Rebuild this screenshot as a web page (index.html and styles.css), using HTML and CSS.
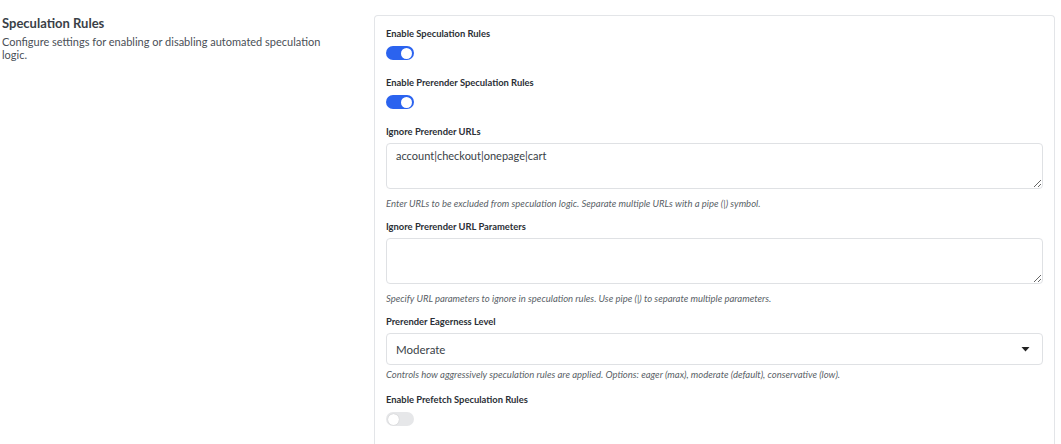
FILE: index.html
```html
<!DOCTYPE html>
<html lang="en">
<head>
<meta charset="utf-8">
<title>Speculation Rules</title>
<link rel="stylesheet" href="styles.css">
</head>
<body>
<div class="layout">
  <div class="intro">
    <h2 class="intro-title">Speculation Rules</h2>
    <p class="intro-desc">Configure settings for enabling or disabling automated speculation logic.</p>
  </div>
  <div class="card">
    <div class="field field-switch">
      <div class="label">Enable Speculation Rules</div>
      <span class="switch on"></span>
    </div>
    <div class="field field-switch">
      <div class="label">Enable Prerender Speculation Rules</div>
      <span class="switch on"></span>
    </div>
    <div class="field field-input">
      <div class="label">Ignore Prerender URLs</div>
      <textarea class="textarea">account|checkout|onepage|cart</textarea>
      <div class="help">Enter URLs to be excluded from speculation logic. Separate multiple URLs with a pipe (|) symbol.</div>
    </div>
    <div class="field field-input">
      <div class="label">Ignore Prerender URL Parameters</div>
      <textarea class="textarea"></textarea>
      <div class="help">Specify URL parameters to ignore in speculation rules. Use pipe (|) to separate multiple parameters.</div>
    </div>
    <div class="field field-input">
      <div class="label">Prerender Eagerness Level</div>
      <div class="select">
        <span class="select-value">Moderate</span>
        <svg class="caret" width="9" height="5" viewBox="0 0 9 5"><path d="M0.5 0H8.5L4.5 4.5Z" fill="#222"/></svg>
      </div>
      <div class="help">Controls how aggressively speculation rules are applied. Options: eager (max), moderate (default), conservative (low).</div>
    </div>
    <div class="field field-switch">
      <div class="label">Enable Prefetch Speculation Rules</div>
      <span class="switch"></span>
    </div>
  </div>
</div>
</body>
</html>
```
FILE: styles.css
```css
* { box-sizing: border-box; }
html, body { margin: 0; padding: 0; background: #fff; }
body {
  font-family: "Lato", "Noto Sans", sans-serif;
  color: #3a3f47;
  overflow: hidden;
  height: 444px;
}
.layout {
  display: grid;
  grid-template-columns: 372px 681px;
  padding: 15px 0 0 2px;
}
.intro-title {
  margin: 0;
  font-size: 13px;
  font-weight: 700;
  line-height: 16px;
  color: #3a3f47;
}
.intro-desc {
  margin: 5px 0 0;
  font-size: 11px;
  line-height: 12.5px;
  width: 330px;
  color: #4a4f57;
}
.card {
  border: 1px solid #e3e5e8;
  border-bottom: none;
  border-radius: 4px 4px 0 0;
  padding: 11px 11px 30px;
  min-height: 440px;
}
.label {
  font-size: 9.4px;
  font-weight: 700;
  line-height: 14px;
  color: #2b2f36;
  margin-bottom: 5px;
}
.field-input .label { margin-bottom: 4px; }
.field-switch { margin-bottom: 16px; }
.field-switch:last-child { margin-bottom: 0; }
.switch {
  display: block;
  width: 28px;
  height: 14px;
  border-radius: 7px;
  background: #e6e7e9;
  position: relative;
}
.switch::after {
  content: "";
  position: absolute;
  top: 1.5px;
  left: 2px;
  width: 11px;
  height: 11px;
  border-radius: 50%;
  background: #fff;
  box-shadow: 0 0 1px rgba(0,0,0,0.25);
}
.switch.on { background: #2b63ef; }
.switch.on::after { left: 15px; box-shadow: none; }
.textarea {
  display: block;
  width: 100%;
  height: 46px;
  border: 1px solid #dfe1e4;
  border-radius: 4px;
  padding: 5px 9px;
  font-family: inherit;
  font-size: 11px;
  line-height: 14px;
  color: #3a3f47;
  resize: vertical;
  margin: 0;
}
.help {
  font-size: 9.5px;
  font-style: italic;
  line-height: 12px;
  color: #5a5f67;
  margin-top: 9px;
  margin-bottom: 10px;
}
.select {
  display: flex;
  align-items: center;
  justify-content: space-between;
  height: 32px;
  border: 1px solid #dfe1e4;
  border-radius: 4px;
  padding: 0 12px 0 9px;
  font-size: 11.5px;
  color: #3a3f47;
}
.select + .help { margin-top: 4px; margin-bottom: 12px; }
.caret { display: block; }
```
